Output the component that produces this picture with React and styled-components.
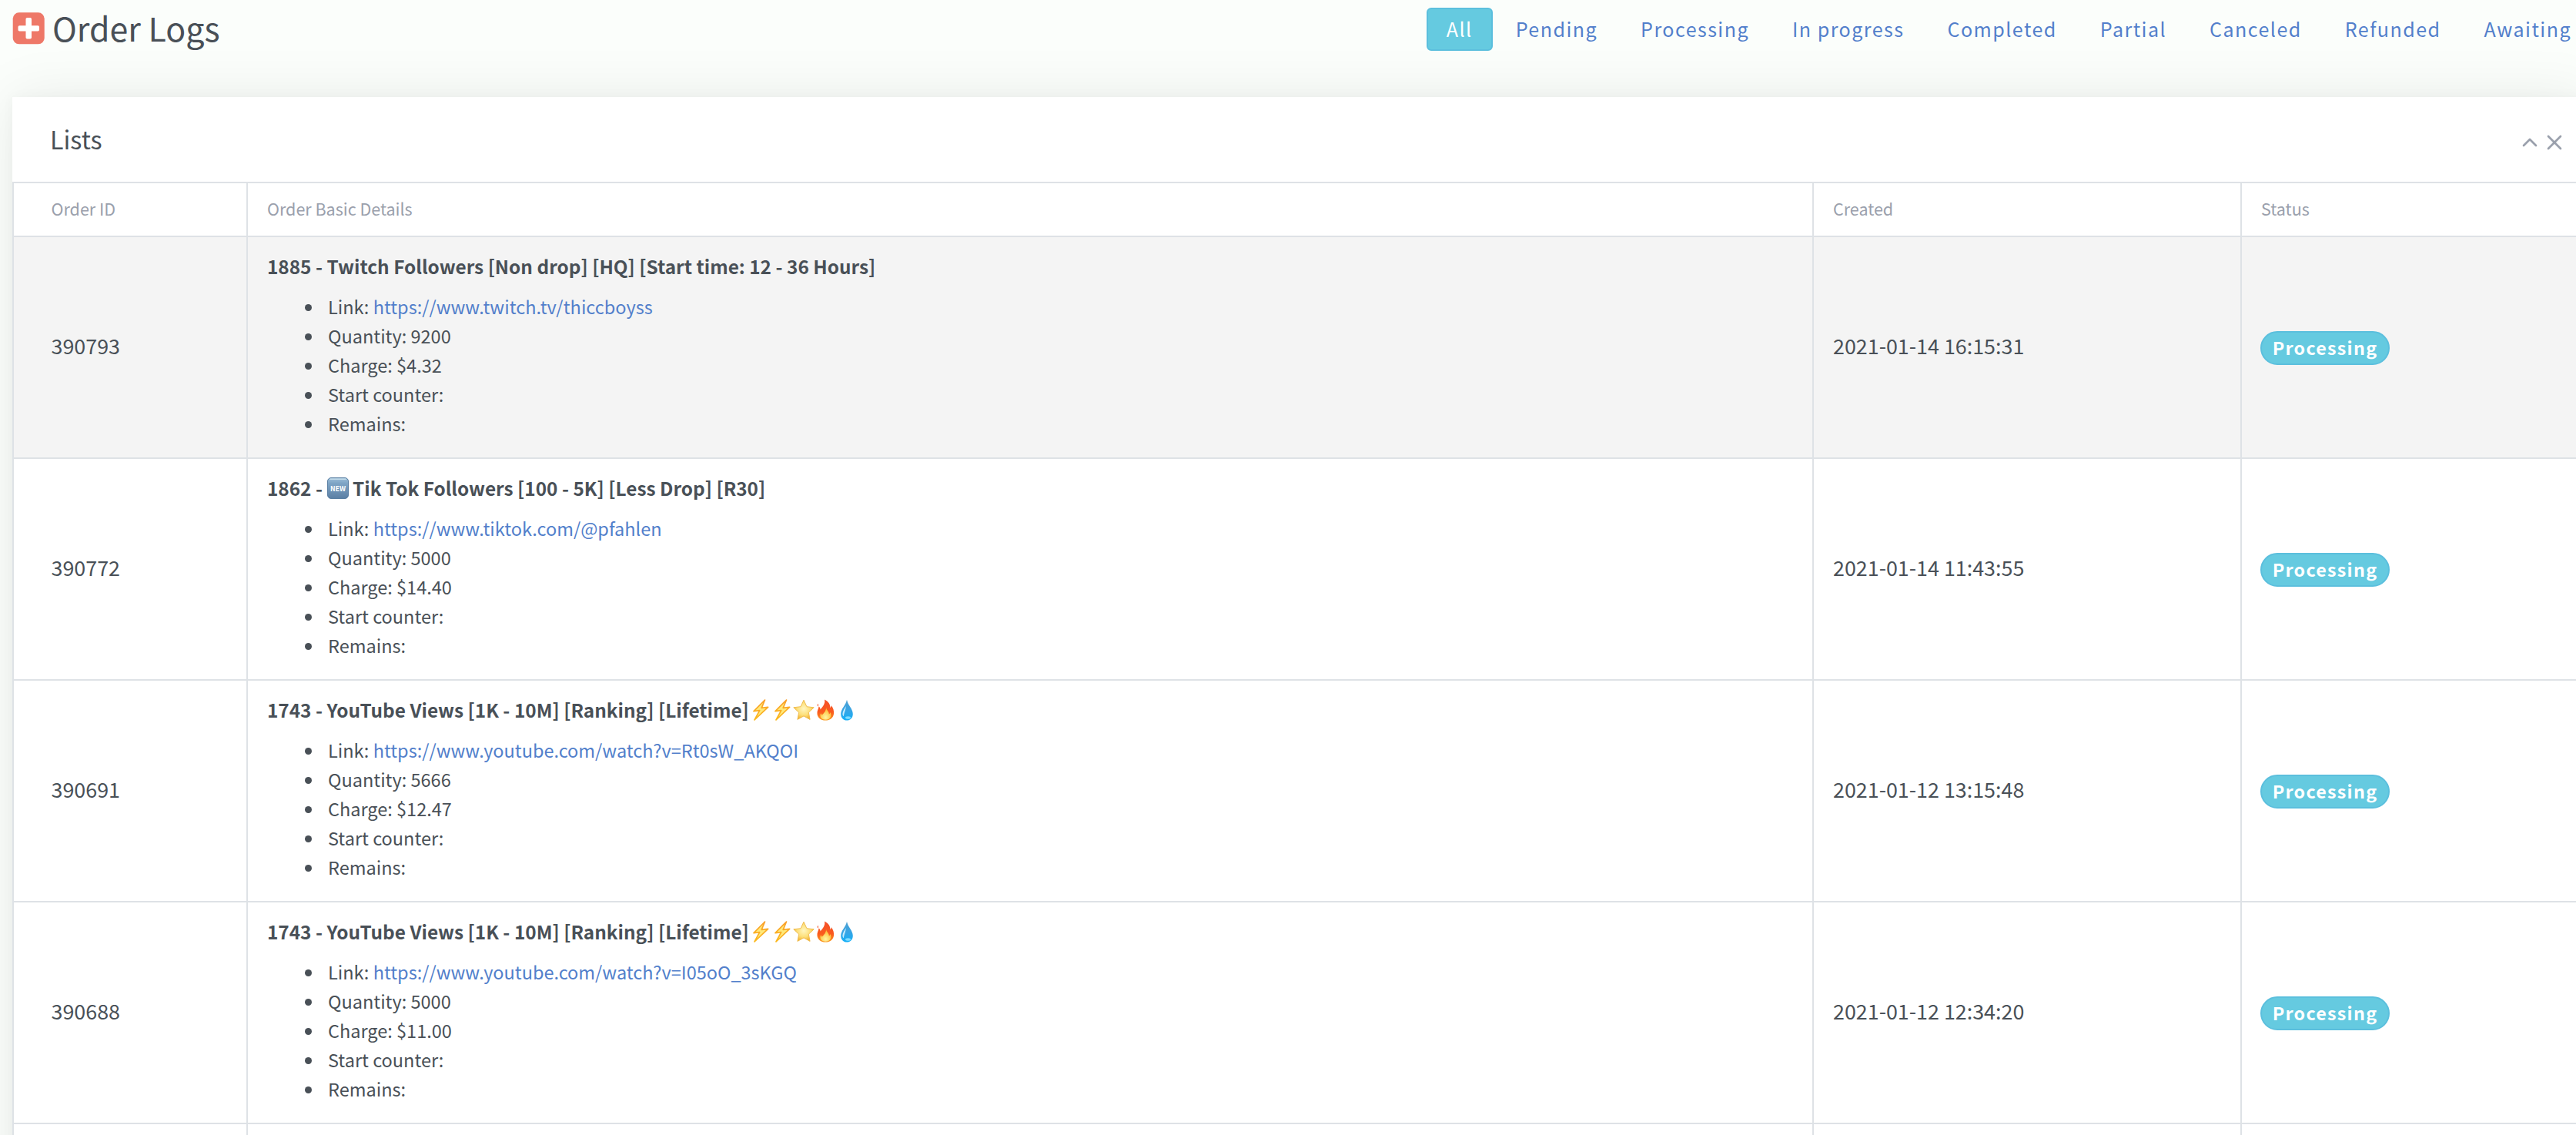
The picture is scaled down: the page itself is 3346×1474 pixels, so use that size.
import React from 'react';
import styled, { createGlobalStyle } from 'styled-components';
import { ChevronUp, X } from 'lucide-react';

const tabs = ['All', 'Pending', 'Processing', 'In progress', 'Completed', 'Partial', 'Canceled', 'Refunded', 'Awaiting'];

const orders = [
    { id: '390793', title: '1885 - Twitch Followers [Non drop] [HQ] [Start time: 12 - 36 Hours]', link: 'https://www.twitch.tv/thiccboyss', quantity: '9200', charge: '$4.32', created: '2021-01-14 16:15:31' },
    { id: '390772', title: 'Tik Tok Followers [100 - 5K] [Less Drop] [R30]', newItem: '1862 - ', link: 'https://www.tiktok.com/@pfahlen', quantity: '5000', charge: '$14.40', created: '2021-01-14 11:43:55' },
    { id: '390691', title: '1743 - YouTube Views [1K - 10M] [Ranking] [Lifetime]', hot: true, link: 'https://www.youtube.com/watch?v=Rt0sW_AKQOI', quantity: '5666', charge: '$12.47', created: '2021-01-12 13:15:48' },
    { id: '390688', title: '1743 - YouTube Views [1K - 10M] [Ranking] [Lifetime]', hot: true, link: 'https://www.youtube.com/watch?v=I05oO_3sKGQ', quantity: '5000', charge: '$11.00', created: '2021-01-12 12:34:20' },
];

const Gradients = () => (
    <Defs>
        <defs>
            <linearGradient id="gNew" x1="0" y1="0" x2="0" y2="1">
                <stop offset="0" stopColor="#9dbfd8" />
                <stop offset=".25" stopColor="#7fa5c6" />
                <stop offset="1" stopColor="#5b7fa4" />
            </linearGradient>
            <linearGradient id="gBolt" x1="0" y1="0" x2="0" y2="1">
                <stop offset="0" stopColor="#f9a02c" />
                <stop offset="1" stopColor="#fbb91d" />
            </linearGradient>
            <radialGradient id="gStar" cx=".5" cy=".45" r=".55">
                <stop offset="0" stopColor="#fff6c0" />
                <stop offset=".6" stopColor="#fddf78" />
                <stop offset="1" stopColor="#f4b030" />
            </radialGradient>
            <linearGradient id="gFire" x1="0" y1="0" x2="0" y2="1">
                <stop offset="0" stopColor="#f4502a" />
                <stop offset=".6" stopColor="#fa5a1e" />
                <stop offset="1" stopColor="#fb9a1e" />
            </linearGradient>
            <radialGradient id="gFlame" cx=".5" cy=".8" r=".7">
                <stop offset="0" stopColor="#fff3a0" />
                <stop offset="1" stopColor="#fdb92a" />
            </radialGradient>
            <linearGradient id="gDrop" x1="0" y1="0" x2="0" y2="1">
                <stop offset="0" stopColor="#4f9fd0" />
                <stop offset=".55" stopColor="#35a5e6" />
                <stop offset="1" stopColor="#14b0f8" />
            </linearGradient>
        </defs>
    </Defs>
)

const NewEmoji = () => (
    <Emoji viewBox="0 0 28 28">
        <rect x=".5" y=".5" width="27" height="27" rx="4.5" fill="url(#gNew)" stroke="#5a7fa3" />
        <path d="M4 2.3h20" stroke="#c3dbea" strokeWidth="1.6" strokeLinecap="round" />
        <text x="14" y="18" textAnchor="middle" textLength="20" lengthAdjust="spacingAndGlyphs" fill="#fff" fontSize="9.5" fontWeight="700">NEW</text>
    </Emoji>
)

const Bolt = () => (
    <Emoji viewBox="0 0 28 28">
        <path d="M19.5 1 5 15.6l7.700-.9L6 27l17.600-16.600-8.400 1z" fill="#ffe97a" stroke="url(#gBolt)" strokeWidth="1.7" strokeLinejoin="round" />
    </Emoji>
)

const Star = () => (
    <Emoji viewBox="0 0 28 28">
        <path d="M14 1.2l3.9 8.5 9.3 1.1-6.9 6.4 1.8 9.2-8.1-4.5-8.1 4.5 1.8-9.2L.8 10.8l9.3-1.1z" fill="url(#gStar)" stroke="#efbd51" strokeWidth="1" strokeLinejoin="round" />
    </Emoji>
)

const Fire = () => (
    <Emoji viewBox="0 0 28 28">
        <path d="M13 .5c4.8 2.2 7.8 6.3 7.3 10.5 1.1-.7 1.5-1.8 1.5-3.1 2.6 3.5 3.6 7 3.2 11-.5 5-4.8 8.6-10.8 8.6S4 24 3.5 19.2C3 15.5 5 13 5.6 9.5c1.4 1 2 2.3 2 4C10.5 9.8 14.3 6 13 .5z" fill="url(#gFire)" />
        <path d="M4.3 9.5c-1-1.2-.7-2.7.3-3.7 0 1.4 1 2.3-.3 3.7z" fill="#f4552a" />
        <path d="M15 10.5c.3 4 4 5 3.8 9 1-.5 1.5-1.3 1.7-2.5 2.5 5-.5 9.8-6 9.8-6 0-8.2-4-6.5-8.3.8.7 1.3 1.3 1.6 2.3 2.6-2.6 5.7-5.7 5.4-10.3z" fill="url(#gFlame)" />
    </Emoji>
)

const Drop = () => (
    <Emoji viewBox="0 0 28 28">
        <path d="M14 .8c1 6.4 7.8 11.8 7.8 18.4 0 5-3.3 8.3-7.8 8.3s-7.8-3.3-7.8-8.3C6.2 12.600 13 7.200 14 .8z" fill="url(#gDrop)" />
        <path d="M12.600 9c-1.500 3.600-4.200 6.700-4.200 10 0 1.500.6 2.600 1.500 3.200.3-4.600 2.900-8 2.700-13.200z" fill="#c5ecff" />
        <ellipse cx="15.5" cy="24" rx="3.5" ry="1.8" fill="#7fdcff" />
    </Emoji>
)

const App = () => {

    return (
        <Page>
            <GlobalStyle />
            <Gradients />
            <PageHeader>
                <PageTitle>
                    <PlusIcon viewBox="0 0 42 42">
                        <rect x=".7" y=".3" width="41" height="41" rx="8" fill="#ee7868" />
                        <path d="M19.3 7h3.9q1.8 0 1.8 1.8V17.3h8.200q1.800 0 1.800 1.800v3.700q0 1.800-1.800 1.800H25v8.200q0 1.800-1.800 1.800h-3.900q-1.800 0-1.800-1.800V24.600H9.300q-1.800 0-1.800-1.800v-3.700q0-1.800 1.800-1.800h8.200V8.800q0-1.800 1.800-1.800z" fill="#fff" />
                    </PlusIcon>
                    Order Logs
                </PageTitle>
                <Tabs>
                    {tabs.map((tab, i) => <Tab key={tab} $active={i === 0}>{tab}</Tab>)}
                </Tabs>
            </PageHeader>
            <Card>
                <CardHeader>
                    <h3>Lists</h3>
                    <CardOptions>
                        <ChevronUp size={32} />
                        <X size={32} />
                    </CardOptions>
                </CardHeader>
                <HeadRow>
                    <HeadCell $first>Order ID</HeadCell>
                    <HeadCell>Order Basic Details</HeadCell>
                    <HeadCell>Created</HeadCell>
                    <HeadCell>Status</HeadCell>
                </HeadRow>
                {orders.map((order, i) => (
                    <Row key={order.id} $hover={i === 0}>
                        <Cell $first>{order.id}</Cell>
                        <Details>
                            <ItemTitle>
                                {order.newItem && <>{order.newItem}<NewEmoji />{' '}</>}
                                {order.title}
                                {order.hot && <Emojis><Bolt /><Bolt /><Star /><Fire /><Drop /></Emojis>}
                            </ItemTitle>
                            <ItemList>
                                <li>Link: <a>{order.link}</a></li>
                                <li>Quantity: {order.quantity}</li>
                                <li>Charge: {order.charge}</li>
                                <li>Start counter:</li>
                                <li>Remains:</li>
                            </ItemList>
                        </Details>
                        <Cell>{order.created}</Cell>
                        <StatusCell><Badge>Processing</Badge></StatusCell>
                    </Row>
                ))}
                <Row>
                    <Cell $first />
                    <Cell />
                    <Cell />
                    <Cell />
                </Row>
            </Card>
        </Page>
    )
}

export default App;


const GlobalStyle = createGlobalStyle`
    * {
        box-sizing: border-box;
    }

    body {
        margin: 0;
        overflow: hidden;
        background: #fbfefb;
        color: #495057;
        font-family: 'Noto Sans CJK SC', 'Open Sans', sans-serif;
        font-size: 26.86px;
    }
`;

const Page = styled.div`
    height: 1474px;
    overflow: hidden;
    padding-left: 16px;
`;

const PageHeader = styled.div`
    display: flex;
    justify-content: space-between;
    height: 126px;
`;

const PageTitle = styled.h1`
    display: flex;
    margin: 0;
    padding-top: 2px;
    font-size: 42.9px;
    font-weight: 400;
    line-height: 66px;
`;

const PlusIcon = styled.svg`
    width: 42px;
    height: 42px;
    margin: 14px 10px 0 0;
`;

const Tabs = styled.div`
    display: flex;
    gap: 4px;
    margin-right: -20px;
    padding-top: 10px;
`;

const Tab = styled.a`
    height: 56px;
    padding: 0 24px;
    border: 2px solid ${p => p.$active ? '#5bbfdd' : 'transparent'};
    border-radius: 6px;
    background: ${p => p.$active ? '#65cae0' : 'transparent'};
    color: ${p => p.$active ? '#fff' : '#527fcb'};
    font-size: 25.07px;
    line-height: 51px;
    letter-spacing: 1.46px;
    white-space: nowrap;
`;

const Card = styled.div`
    width: 3346px;
    background: #fff;
    box-shadow: 0 0 70px rgba(0, 0, 0, .08), 0 0 16px rgba(0, 0, 0, .03);
`;

const CardHeader = styled.div`
    display: flex;
    justify-content: space-between;
    height: 110px;
    padding-left: 49px;

    h3 {
        margin: 0;
        font-size: 32.2px;
        font-weight: 400;
        line-height: 108px;
    }
`;

const CardOptions = styled.div`
    display: flex;
    padding: 42.5px 28.5px 0 0;
    color: #9aa0ac;
`;

const Row = styled.div`
    display: grid;
    grid-template-columns: 304px 2034px 556px 1fr;
    height: 288px;
    border-top: 2px solid #dee2e6;
    background: ${p => p.$hover ? '#f4f4f4' : '#fff'};
`;

const HeadRow = styled(Row)`
    height: 70px;
`;

const Cell = styled.div`
    display: flex;
    align-items: center;
    padding-left: ${p => p.$first ? 48.5 : 25}px;
    padding-bottom: 5px;
    border-left: 2px solid #dee2e6;
`;

const HeadCell = styled(Cell)`
    padding-bottom: 4px;
    color: #9aa0ac;
    font-size: 21.5px;
`;

const StatusCell = styled(Cell)`
    padding: 2px 0 0 24px;
`;

const Details = styled(Cell)`
    flex-direction: column;
    align-items: flex-start;
    justify-content: flex-start;
`;

const ItemTitle = styled.div`
    height: 42px;
    margin-top: 17px;
    font-size: 24.36px;
    font-weight: 700;
    line-height: 42px;
    white-space: pre;
`;

const ItemList = styled.ul`
    margin: 12px 0 0;
    padding-left: 49px;
    list-style: none;
    font-size: 23.5px;
    line-height: 38px;

    li {
        display: flex;
        align-items: center;
        white-space: pre;
    }

    li::before {
        content: '';
        width: 9px;
        height: 9px;
        margin: 3px 21px 0 0;
        border-radius: 50%;
        background: #495057;
    }

    a {
        color: #527fcb;
    }
`;

const Badge = styled.span`
    width: 168px;
    height: 44px;
    border: 2px solid #5bbfdd;
    border-radius: 22px;
    background: #65cae0;
    color: #fff;
    font-size: 23.3px;
    font-weight: 700;
    line-height: 39px;
    letter-spacing: 1.25px;
    text-align: center;
`;

const Emoji = styled.svg`
    width: 28px;
    height: 28px;
    vertical-align: -4px;
`;

const Emojis = styled.span`
    margin-left: 1px;
`;

const Defs = styled.svg`
    display: block;
    width: 0;
    height: 0;
`;
